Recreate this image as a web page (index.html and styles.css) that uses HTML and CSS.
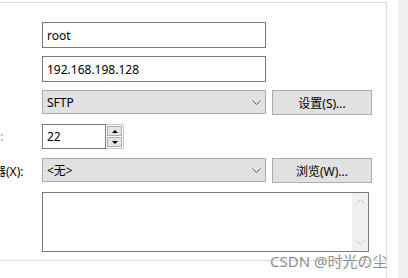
FILE: index.html
```html
<!DOCTYPE html>
<html lang="zh-CN">

<head>
  <meta charset="UTF-8">
  <meta name="viewport" content="width=device-width, initial-scale=1.0">
  <title>新建会话属性</title>
  <link rel="stylesheet" href="styles.css">
</head>

<body>
  <div id="window">
    <div class="panel">
      <div class="form">
        <div class="row">
          <div class="label"></div>
          <div class="textbox">root</div>
        </div>
        <div class="row">
          <div class="label"></div>
          <div class="textbox">192.168.198.128</div>
        </div>
        <div class="row tall">
          <div class="label"></div>
          <div class="select">
            <span>SFTP</span>
            <svg class="chevron" width="9" height="5" viewBox="0 0 9 5">
              <path d="M0.5 0.5 L4.5 4.5 L8.5 0.5" fill="none" stroke="#606060" stroke-width="1"/>
            </svg>
          </div>
          <div class="button">设置(S)...</div>
        </div>
        <div class="row tall spaced">
          <div class="label"><span class="cut-blue">:</span></div>
          <div class="spin">
            <div class="spin-input">22</div>
            <div class="spin-buttons">
              <div class="spin-btn"><span class="arrow-up"></span></div>
              <div class="spin-btn"><span class="arrow-down"></span></div>
            </div>
          </div>
        </div>
        <div class="row tall spaced">
          <div class="label"><span class="cut">器(X):</span></div>
          <div class="select">
            <span>&lt;无&gt;</span>
            <svg class="chevron" width="9" height="5" viewBox="0 0 9 5">
              <path d="M0.5 0.5 L4.5 4.5 L8.5 0.5" fill="none" stroke="#606060" stroke-width="1"/>
            </svg>
          </div>
          <div class="button">浏览(W)...</div>
        </div>
        <div class="row memo-row spaced">
          <div class="label"></div>
          <div class="memo">
            <div class="memo-text"></div>
            <div class="scrollbar">
              <svg width="9" height="5" viewBox="0 0 9 5">
                <path d="M0.5 4.5 L4.5 0.5 L8.5 4.5" fill="none" stroke="#c0c0c0" stroke-width="1"/>
              </svg>
              <svg width="9" height="5" viewBox="0 0 9 5">
                <path d="M0.5 0.5 L4.5 4.5 L8.5 0.5" fill="none" stroke="#c0c0c0" stroke-width="1"/>
              </svg>
            </div>
          </div>
        </div>
      </div>
      <div class="divider"></div>
    </div>
    <div class="gutter"></div>
    <div class="side"></div>
  </div>
  <div class="watermark">CSDN @时光の尘</div>
</body>

</html>
```

FILE: styles.css
```css
body {
  margin: 0;
  background-color: white;
  font-family: "Noto Sans", "Noto Sans CJK SC", sans-serif;
  font-size: 12px;
  color: black;
}

#window {
  display: flex;
  flex-direction: row;
  height: 278px;
  overflow: hidden;
}

.panel {
  margin-top: 2px;
  width: 386px;
  height: 275px;
  border-top: 1px solid #dcdcdc;
  border-right: 1px solid #dcdcdc;
}

.gutter {
  width: 11px;
}

.side {
  width: 10px;
  background-color: #f0f0f0;
}

.form {
  display: flex;
  flex-direction: column;
  gap: 8px;
  padding-top: 19px;
}

.row {
  display: flex;
  flex-direction: row;
  align-items: center;
  height: 26px;
}

.row.tall {
  height: 25px;
  align-items: flex-start;
}

.row.spaced {
  margin-top: 1px;
}

.label {
  width: 42px;
  height: 100%;
  display: flex;
  align-items: center;
  overflow: hidden;
  white-space: nowrap;
}

.cut {
  margin-left: -6px;
}

.cut-blue {
  color: #5aa9ec;
}

.textbox {
  box-sizing: border-box;
  width: 224px;
  height: 26px;
  border: 1px solid #7a7a7a;
  padding-left: 4px;
  display: flex;
  align-items: center;
}

.select {
  box-sizing: border-box;
  width: 224px;
  height: 24px;
  border: 1px solid #adadad;
  background-color: #e1e1e1;
  padding: 0 4px 0 4px;
  display: flex;
  align-items: center;
  justify-content: space-between;
}

.button {
  box-sizing: border-box;
  width: 100px;
  height: 25px;
  margin-left: 6px;
  border: 1px solid #adadad;
  background-color: #e1e1e1;
  display: flex;
  align-items: center;
  justify-content: center;
}

.spin {
  display: flex;
  flex-direction: row;
  height: 25px;
}

.spin-input {
  box-sizing: border-box;
  width: 64px;
  height: 25px;
  border: 1px solid #7a7a7a;
  padding-left: 4px;
  display: flex;
  align-items: center;
}

.spin-buttons {
  box-sizing: border-box;
  width: 18px;
  height: 25px;
  border: 1px solid #c8c8c8;
  border-left: none;
  padding: 1px;
  display: flex;
  flex-direction: column;
  gap: 1px;
}

.spin-btn {
  flex: 1;
  border: 1px solid #adadad;
  background-color: #e5e5e5;
  display: flex;
  align-items: center;
  justify-content: center;
}

.arrow-up,
.arrow-down {
  width: 0;
  height: 0;
  border-left: 3px solid transparent;
  border-right: 3px solid transparent;
}

.arrow-up {
  border-bottom: 3px solid black;
}

.arrow-down {
  border-top: 3px solid black;
}

.memo-row {
  height: 60px;
}

.memo {
  box-sizing: border-box;
  width: 327px;
  height: 60px;
  border: 1px solid #7a7a7a;
  display: flex;
  flex-direction: row;
}

.memo-text {
  flex: 1;
}

.scrollbar {
  width: 16px;
  background-color: #f0f0f0;
  display: flex;
  flex-direction: column;
  align-items: center;
  justify-content: space-between;
  padding: 6px 0 6px 0;
}

.divider {
  margin-top: 8px;
  height: 1px;
  background-color: #dcdcdc;
}

.watermark {
  position: absolute;
  left: 270px;
  top: 250px;
  font-family: "Noto Sans", "Noto Sans CJK SC", sans-serif;
  font-size: 15px;
  color: #8e8e8e;
  white-space: nowrap;
}
```
